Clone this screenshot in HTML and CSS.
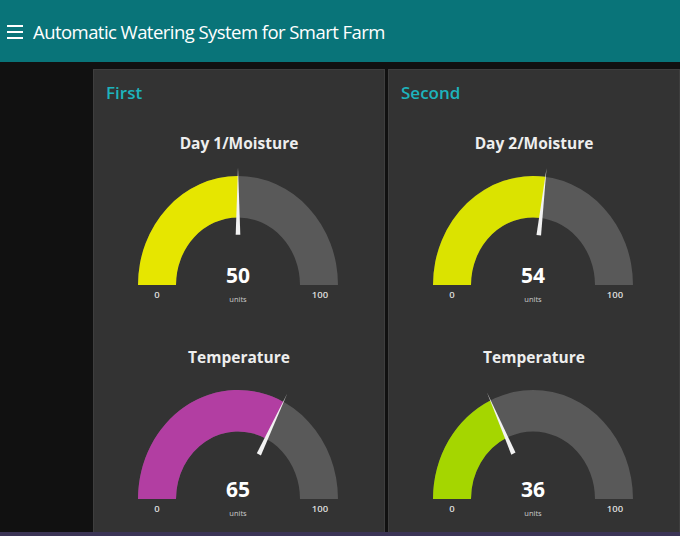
FILE: index.html
```html
<!DOCTYPE html>
<html>
<head>
<meta charset="utf-8">
<link rel="stylesheet" href="styles.css">
</head>
<body>
<header class="topbar">
  <svg class="menu-icon" width="16" height="14" viewBox="0 0 16 14">
    <rect x="0" y="0" width="16" height="2" fill="#fff"/>
    <rect x="0" y="6" width="16" height="2" fill="#fff"/>
    <rect x="0" y="12" width="16" height="2" fill="#fff"/>
  </svg>
  <h1 class="app-title">Automatic Watering System for Smart Farm</h1>
</header>
<main class="content">
  <section class="group">
    <h2 class="group-title">First</h2>
    <div class="gauge">
      <h3 class="gauge-title">Day 1/Moisture</h3>
      <svg class="gauge-svg" width="260" height="190" viewBox="0 0 260 190">
        <g transform="translate(129,130) scale(1,1.09)">
          <path d="M -100 0 A 100 100 0 0 1 100 0 L 62 0 A 62 62 0 0 0 -62 0 Z" fill="#595959"/>
          <path d="M -100 0 A 100 100 0 0 1 0 -100 L 0 -62 A 62 62 0 0 0 -62 0 Z" fill="#e6e600"/>
          <polygon points="0,-108 2.3,-46 -2.3,-46" fill="#f2f2f2" transform="rotate(0)"/>
        </g>
        <text class="g-value" x="129" y="128">50</text>
        <text class="g-limit" x="48" y="143">0</text>
        <text class="g-limit" x="211" y="143">100</text>
        <text class="g-units" x="129" y="147">units</text>
      </svg>
    </div>
    <div class="gauge">
      <h3 class="gauge-title">Temperature</h3>
      <svg class="gauge-svg" width="260" height="190" viewBox="0 0 260 190">
        <g transform="translate(129,130) scale(1,1.09)">
          <path d="M -100 0 A 100 100 0 0 1 100 0 L 62 0 A 62 62 0 0 0 -62 0 Z" fill="#595959"/>
          <path d="M -100 0 A 100 100 0 0 1 45.40 -89.10 L 28.15 -55.24 A 62 62 0 0 0 -62 0 Z" fill="#b23ea2"/>
          <polygon points="0,-108 2.3,-46 -2.3,-46" fill="#f2f2f2" transform="rotate(27)"/>
        </g>
        <text class="g-value" x="129" y="128">65</text>
        <text class="g-limit" x="48" y="143">0</text>
        <text class="g-limit" x="211" y="143">100</text>
        <text class="g-units" x="129" y="147">units</text>
      </svg>
    </div>
  </section>
  <section class="group">
    <h2 class="group-title">Second</h2>
    <div class="gauge">
      <h3 class="gauge-title">Day 2/Moisture</h3>
      <svg class="gauge-svg" width="260" height="190" viewBox="0 0 260 190">
        <g transform="translate(129,130) scale(1,1.09)">
          <path d="M -100 0 A 100 100 0 0 1 100 0 L 62 0 A 62 62 0 0 0 -62 0 Z" fill="#595959"/>
          <path d="M -100 0 A 100 100 0 0 1 12.53 -99.21 L 7.77 -61.51 A 62 62 0 0 0 -62 0 Z" fill="#dbe300"/>
          <polygon points="0,-108 2.3,-46 -2.3,-46" fill="#f2f2f2" transform="rotate(7.2)"/>
        </g>
        <text class="g-value" x="129" y="128">54</text>
        <text class="g-limit" x="48" y="143">0</text>
        <text class="g-limit" x="211" y="143">100</text>
        <text class="g-units" x="129" y="147">units</text>
      </svg>
    </div>
    <div class="gauge">
      <h3 class="gauge-title">Temperature</h3>
      <svg class="gauge-svg" width="260" height="190" viewBox="0 0 260 190">
        <g transform="translate(129,130) scale(1,1.09)">
          <path d="M -100 0 A 100 100 0 0 1 100 0 L 62 0 A 62 62 0 0 0 -62 0 Z" fill="#595959"/>
          <path d="M -100 0 A 100 100 0 0 1 -42.58 -90.48 L -26.40 -56.10 A 62 62 0 0 0 -62 0 Z" fill="#a5d600"/>
          <polygon points="0,-108 2.3,-46 -2.3,-46" fill="#f2f2f2" transform="rotate(-25.2)"/>
        </g>
        <text class="g-value" x="129" y="128">36</text>
        <text class="g-limit" x="48" y="143">0</text>
        <text class="g-limit" x="211" y="143">100</text>
        <text class="g-units" x="129" y="147">units</text>
      </svg>
    </div>
  </section>
</main>
<div class="taskbar"></div>
</body>
</html>
```
FILE: styles.css
```css
html, body {
  margin: 0;
  padding: 0;
}
body {
  width: 680px;
  height: 536px;
  overflow: hidden;
  background: #111111;
  font-family: "Open Sans", "Noto Sans", sans-serif;
  display: flex;
  flex-direction: column;
}
.topbar {
  height: 62px;
  flex: none;
  background: #097479;
  display: flex;
  align-items: center;
  padding-left: 7px;
  gap: 10px;
  box-sizing: border-box;
}
.menu-icon {
  display: block;
  margin-top: 1px;
}
.app-title {
  margin: 0;
  color: #ffffff;
  font-size: 18.5px;
  font-weight: 400;
  letter-spacing: -0.55px;
}
.content {
  flex: 1;
  display: flex;
  gap: 3px;
  padding: 7px 0 0 93px;
  min-height: 0;
}
.group {
  width: 292px;
  flex: none;
  box-sizing: border-box;
  background: #333333;
  border: 1px solid #3e3e3e;
  border-bottom: none;
}
.group-title {
  margin: 0;
  padding: 13px 0 0 12px;
  height: 20px;
  line-height: 20px;
  font-size: 17px;
  font-weight: 600;
  color: #1db4bd;
}
.gauge {
  height: 214px;
  display: flex;
  flex-direction: column;
  align-items: center;
}
.group-title + .gauge {
  margin-top: 28px;
}
.gauge-title {
  margin: 0;
  height: 24px;
  line-height: 24px;
  font-size: 15.5px;
  font-weight: 700;
  color: #eeeeee;
}
.gauge-svg {
  display: block;
}
.g-value {
  font-family: "Open Sans", sans-serif;
  font-weight: 700;
  font-size: 21px;
  fill: #ffffff;
  text-anchor: middle;
}
.g-limit {
  font-family: "Open Sans", sans-serif;
  font-size: 9.5px;
  font-weight: 600;
  fill: #dddddd;
  text-anchor: middle;
}
.g-units {
  font-family: "Open Sans", sans-serif;
  font-size: 7.5px;
  fill: #cccccc;
  text-anchor: middle;
}
.taskbar {
  height: 4px;
  flex: none;
  background: #3b3456;
}
```
